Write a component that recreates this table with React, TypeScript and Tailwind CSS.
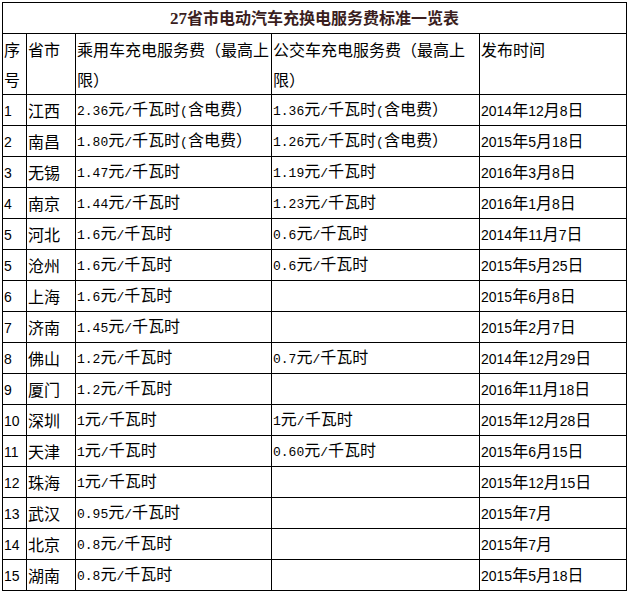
import React from "react";

type Row = [string, string, string, string, string];

const rows: Row[] = [
  ["1", "江西", "2.36元/千瓦时(含电费）", "1.36元/千瓦时(含电费）", "2014年12月8日"],
  ["2", "南昌", "1.80元/千瓦时(含电费）", "1.26元/千瓦时(含电费）", "2015年5月18日"],
  ["3", "无锡", "1.47元/千瓦时", "1.19元/千瓦时", "2016年3月8日"],
  ["4", "南京", "1.44元/千瓦时", "1.23元/千瓦时", "2016年1月8日"],
  ["5", "河北", "1.6元/千瓦时", "0.6元/千瓦时", "2014年11月7日"],
  ["5", "沧州", "1.6元/千瓦时", "0.6元/千瓦时", "2015年5月25日"],
  ["6", "上海", "1.6元/千瓦时", "", "2015年6月8日"],
  ["7", "济南", "1.45元/千瓦时", "", "2015年2月7日"],
  ["8", "佛山", "1.2元/千瓦时", "0.7元/千瓦时", "2014年12月29日"],
  ["9", "厦门", "1.2元/千瓦时", "", "2016年11月18日"],
  ["10", "深圳", "1元/千瓦时", "1元/千瓦时", "2015年12月28日"],
  ["11", "天津", "1元/千瓦时", "0.60元/千瓦时", "2015年6月15日"],
  ["12", "珠海", "1元/千瓦时", "", "2015年12月15日"],
  ["13", "武汉", "0.95元/千瓦时", "", "2015年7月"],
  ["14", "北京", "0.8元/千瓦时", "", "2015年7月"],
  ["15", "湖南", "0.8元/千瓦时", "", "2015年5月18日"],
];

// ascii runs get a narrower latin face, like the old bitmap song font
const Mono = ({ text }: { text: string }) => (
  <>
    {text.split(/([\x00-\x7F]+)/).map((part, i) =>
      /^[\x00-\x7F]+$/.test(part) ? (
        <span key={i} className="font-['Liberation_Mono',monospace] text-[13px]">
          {part}
        </span>
      ) : (
        <span key={i}>{part}</span>
      )
    )}
  </>
);

const Sans = ({ text }: { text: string }) => (
  <>
    {text.split(/([\x00-\x7F]+)/).map((part, i) =>
      /^[\x00-\x7F]+$/.test(part) ? (
        <span key={i} className="font-['Liberation_Sans',sans-serif] text-[14px]">
          {part}
        </span>
      ) : (
        <span key={i}>{part}</span>
      )
    )}
  </>
);

const td = "border border-black px-[1px] align-middle whitespace-nowrap";

export default function App() {
  return (
    <div className="bg-white w-[628px] h-[594px] pt-[2px] pl-[2px] font-['Noto_Sans_CJK_SC',sans-serif] text-[16px] text-black">
      <table className="border-collapse table-fixed w-[624px]">
        <colgroup>
          <col className="w-[24px]" />
          <col className="w-[49px]" />
          <col className="w-[196px]" />
          <col className="w-[208px]" />
          <col className="w-[147px]" />
        </colgroup>
        <tbody>
          <tr className="h-[31px]">
            <td colSpan={5} className="border border-black text-center font-bold text-[#3a1e1e] leading-[20px]">
              <span className="font-['Liberation_Serif',serif] text-[17px]">27</span>
              省市电动汽车充换电服务费标准一览表
            </td>
          </tr>
          <tr className="h-[61px] leading-[30px]">
            <td className="border border-black px-[1px] align-top">
              序<br />号
            </td>
            <td className="border border-black px-[1px] align-top">省市</td>
            <td className="border border-black px-[1px] align-top">
              乘用车充电服务费（最高上<br />限）
            </td>
            <td className="border border-black px-[1px] align-top">
              公交车充电服务费（最高上<br />限）
            </td>
            <td className="border border-black px-[1px] align-top">发布时间</td>
          </tr>
          {rows.map((r, i) => (
            <tr key={i} className="h-[31px] leading-[20px]">
              <td className={td}>
                <Sans text={r[0]} />
              </td>
              <td className={td}>{r[1]}</td>
              <td className={td}>
                <Mono text={r[2]} />
              </td>
              <td className={td}>
                <Mono text={r[3]} />
              </td>
              <td className={td}>
                <Sans text={r[4]} />
              </td>
            </tr>
          ))}
        </tbody>
      </table>
    </div>
  );
}
